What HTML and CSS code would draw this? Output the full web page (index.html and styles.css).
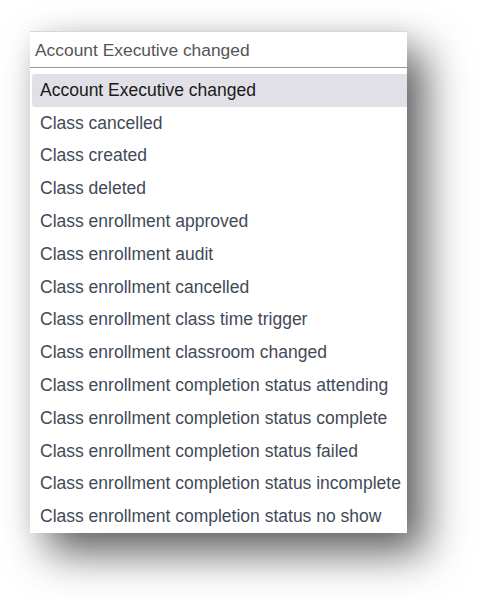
FILE: index.html
```html
<!DOCTYPE html>
<html>
<head>
<meta charset="utf-8">
<link rel="stylesheet" href="styles.css">
</head>
<body>
<div class="dropdown">
  <div class="field">Account Executive changed</div>
  <ul class="list">
    <li class="item active">Account Executive changed</li>
    <li class="item">Class cancelled</li>
    <li class="item">Class created</li>
    <li class="item">Class deleted</li>
    <li class="item">Class enrollment approved</li>
    <li class="item">Class enrollment audit</li>
    <li class="item">Class enrollment cancelled</li>
    <li class="item">Class enrollment class time trigger</li>
    <li class="item">Class enrollment classroom changed</li>
    <li class="item">Class enrollment completion status attending</li>
    <li class="item">Class enrollment completion status complete</li>
    <li class="item">Class enrollment completion status failed</li>
    <li class="item">Class enrollment completion status incomplete</li>
    <li class="item">Class enrollment completion status no show</li>
  </ul>
</div>
</body>
</html>
```
FILE: styles.css
```css
html, body {
  margin: 0;
  padding: 0;
  background: #ffffff;
}
html {
  height: 100%;
}
body {
  min-height: 602px;
  box-sizing: border-box;
  padding: 31px 0 0 30px;
  font-family: "Liberation Sans", Arial, sans-serif;
}
.dropdown {
  width: 377px;
  background: #ffffff;
  border-top: 1px solid #d3d7de;
  box-shadow: 18px 20px 40px rgba(0, 0, 0, 0.62), 0 0 20px rgba(0, 0, 0, 0.06);
}
.field {
  height: 36px;
  box-sizing: border-box;
  padding: 2px 0 0 5px;
  display: flex;
  align-items: center;
  font-size: 17.4px;
  color: #555555;
  border-bottom: 1px solid #9a9a9a;
}
.list {
  list-style: none;
  margin: 0;
  padding: 6px 0 0 2px;
}
.item {
  height: 32.8px;
  display: flex;
  align-items: center;
  padding-left: 8px;
  font-size: 17.5px;
  color: #3f4a57;
  white-space: nowrap;
  overflow: hidden;
}
.item.active {
  background: #e0e0e6;
  color: #1a1a1a;
  border-radius: 3px 0 0 3px;
}
```
